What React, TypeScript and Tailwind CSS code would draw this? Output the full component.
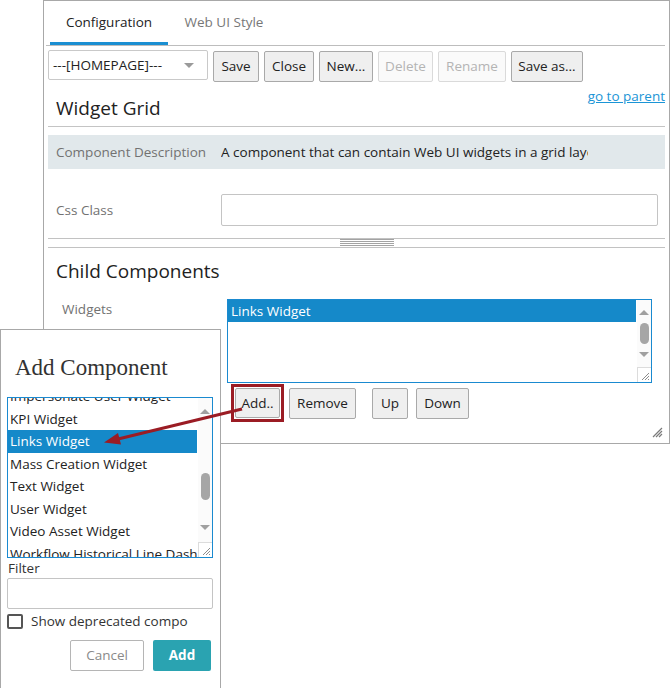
import React from 'react';

const sans = "font-['Open_Sans','Noto_Sans',sans-serif]";

function Tri({ up }: { up?: boolean }) {
  return (
    <div
      className={
        up
          ? 'mx-auto h-0 w-0 border-x-[5px] border-b-[5px] border-x-transparent border-b-[#a0a0a0]'
          : 'mx-auto h-0 w-0 border-x-[5px] border-t-[5px] border-x-transparent border-t-[#a0a0a0]'
      }
    />
  );
}

function Resizer() {
  return (
    <svg width="9" height="9" viewBox="0 0 9 9" className="block">
      <path d="M1 8 L8 1 M4 8 L8 4 M7 8 L8 7" stroke="#8c8c8c" strokeWidth="1" />
    </svg>
  );
}

interface ScrollbarProps {
  upPad: number;
  thumbTop: number;
  thumbH: number;
  downTop: number;
}

function Scrollbar({ upPad, thumbTop, thumbH, downTop }: ScrollbarProps) {
  return (
    <div className="flex w-[14px] flex-col bg-[#fbfbfb]">
      <div style={{ paddingTop: upPad }}>
        <Tri up />
      </div>
      <div className="mx-auto w-[9px] rounded-full bg-[#a6a6a6]" style={{ marginTop: thumbTop, height: thumbH }} />
      <div style={{ marginTop: downTop }}>
        <Tri />
      </div>
      <div className="mt-auto flex h-[15px] w-[14px] items-end justify-end border-l border-t border-[#dcdcdc] bg-white pb-[1px] pr-[1px]">
        <Resizer />
      </div>
    </div>
  );
}

function Btn({ label, w, disabled }: { label: string; w: string; disabled?: boolean }) {
  return (
    <button
      className={
        disabled
          ? `${w} h-[31px] rounded-[2px] border border-[#dadada] bg-[#fafafa] text-[13.5px] text-[#b4b4b4]`
          : `${w} h-[31px] rounded-[2px] border border-[#a9a9a9] bg-[#efefef] text-[13.5px] text-[#222]`
      }
    >
      {label}
    </button>
  );
}

const dialogItems = [
  'Impersonate User Widget',
  'KPI Widget',
  'Links Widget',
  'Mass Creation Widget',
  'Text Widget',
  'User Widget',
  'Video Asset Widget',
  'Workflow Historical Line Dashboard',
];

export default function App() {
  return (
    <div className={`relative h-[688px] w-[670px] overflow-hidden bg-white text-[#333] ${sans}`}>
      {/* main config panel */}
      <div className="ml-[43px] flex h-[444px] w-[627px] flex-col border border-[#a8a8a8] px-[4px]">
        <div className="flex h-[44px] items-end">
          <div className="ml-[2px] flex h-[44px] w-[118px] items-center justify-center border-b-[3px] border-[#1b8fd2] pt-[2px] text-[13.5px] text-[#222]">
            Configuration
          </div>
          <div className="flex h-[44px] w-[112px] items-center justify-center pb-[1px] text-[13.5px] text-[#777]">
            Web UI Style
          </div>
        </div>
        <div className="-ml-[2px] h-[1px] bg-[#bdbdbd]" />

        <div className="mt-[4px] flex items-start gap-[5px]">
          <div className="flex h-[30px] w-[160px] items-center justify-between rounded-[2px] border border-[#c9c9c9] pl-[4px] pr-[13px] text-[13.5px] text-[#222]">
            <span>---[HOMEPAGE]---</span>
            <div className="h-0 w-0 border-x-[5px] border-t-[5px] border-x-transparent border-t-[#9a9a9a]" />
          </div>
          <div className="mt-[1px] flex gap-[5px]">
            <Btn label="Save" w="w-[46px]" />
            <Btn label="Close" w="w-[50px]" />
            <Btn label="New..." w="w-[54px]" />
            <Btn label="Delete" w="w-[55px]" disabled />
            <Btn label="Rename" w="w-[68px]" disabled />
            <Btn label="Save as..." w="w-[72px]" />
          </div>
        </div>

        <div className="flex h-[45px] items-start justify-between border-b border-[#c4c4c4]">
          <div className="mt-[12px] pl-[8px] text-[19px] leading-[28px] text-[#222]">Widget Grid</div>
          <a className="mt-[5px] text-[13.5px] leading-[18px] text-[#1b95d6] underline">go to parent</a>
        </div>

        <div className="mt-[8px] flex h-[34px] items-center bg-[#e1e8eb] text-[13.5px]">
          <div className="w-[173px] pl-[8px] text-[#727272]">Component Description</div>
          <div className="w-[367px] overflow-hidden whitespace-nowrap text-[#222]">
            A component that can contain Web UI widgets in a grid layout.
          </div>
        </div>

        <div className="mt-[25px] flex h-[32px] items-center text-[13.5px]">
          <div className="w-[173px] pl-[8px] text-[#727272]">Css Class</div>
          <div className="h-[32px] w-[437px] rounded-[2px] border border-[#c4c4c4]" />
        </div>

        <div className="mt-[12px] flex h-[10px] border-y border-[#c2c2c2] pl-[292px]">
          <div className="flex w-[54px] flex-col gap-[1px]">
            <div className="h-[1px] bg-[#a3a3a3]" />
            <div className="h-[1px] bg-[#a3a3a3]" />
            <div className="h-[1px] bg-[#a3a3a3]" />
            <div className="h-[1px] bg-[#a3a3a3]" />
          </div>
        </div>

        <div className="mt-[9px] pl-[8px] text-[19px] leading-[28px] text-[#222]">Child Components</div>

        <div className="mt-[14px] flex items-start">
          <div className="mt-[1px] w-[179px] pl-[14px] text-[13.5px] leading-[18px] text-[#727272]">Widgets</div>
          <div className="flex h-[84px] w-[425px] border border-[#1a8ad0]">
            <div className="flex-1">
              <div className="mr-[1px] h-[22px] bg-[#1589c9] pl-[3px] text-[13.5px] leading-[22px] text-white">
                Links Widget
              </div>
            </div>
            <Scrollbar upPad={10} thumbTop={8} thumbH={21} downTop={8} />
          </div>
        </div>

        <div className="mt-[1px] flex items-center pl-[183px]">
          <div className="border-[3px] border-[#9b1c24] p-[1px]">
            <button className="block h-[30px] w-[45px] rounded-[2px] border border-[#a9a9a9] bg-[#efefef] text-[13.5px] text-[#222]">
              Add..
            </button>
          </div>
          <div className="ml-[5px]">
            <Btn label="Remove" w="w-[67px]" />
          </div>
          <div className="ml-[16px]">
            <Btn label="Up" w="w-[36px]" />
          </div>
          <div className="ml-[8px]">
            <Btn label="Down" w="w-[53px]" />
          </div>
        </div>

        <div className="mt-auto mb-[5px] flex justify-end pr-[2px]">
          <svg width="11" height="11" viewBox="0 0 11 11">
            <path d="M1 10 L10 1 M4 10 L10 4 M7 10 L10 7" stroke="#7a7a7a" strokeWidth="1.2" />
          </svg>
        </div>
      </div>

      {/* Add Component dialog */}
      <div className="absolute left-0 top-[329px] flex h-[360px] w-[221px] flex-col border border-[#a8a8a8] bg-white px-[6px]">
        <div className="ml-[8px] mt-[23px] font-['Liberation_Serif',serif] text-[23px] leading-[30px] text-[#333]">
          Add Component
        </div>
        <div className="mt-[14px] flex h-[161px] w-[206px] border border-[#1a8ad0]">
          <div className="flex-1 overflow-hidden">
            <div className="-mt-[13px]">
              {dialogItems.map((it) => (
                <div
                  key={it}
                  className={
                    it === 'Links Widget'
                      ? 'mr-[1px] h-[22.5px] whitespace-nowrap bg-[#1589c9] pl-[2px] text-[13.5px] leading-[22.5px] text-white'
                      : 'h-[22.5px] whitespace-nowrap pl-[2px] text-[13.5px] leading-[22.5px] text-[#222]'
                  }
                >
                  {it}
                </div>
              ))}
            </div>
          </div>
          <Scrollbar upPad={11} thumbTop={59} thumbH={27} downTop={25} />
        </div>
        <div className="mt-[1px] pl-[1px] text-[13.5px] leading-[18px] text-[#333]">Filter</div>
        <div className="mt-[1px] h-[31px] w-[206px] rounded-[2px] border border-[#c4c4c4]" />
        <div className="mt-[5px] flex h-[15px] items-center gap-[8px]">
          <div className="h-[15px] w-[16px] rounded-[2px] border-2 border-[#555]" />
          <span className="text-[13.5px] leading-[15px] text-[#333]">Show deprecated compo</span>
        </div>
        <div className="mt-[11px] flex gap-[9px] pl-[63px]">
          <button className="h-[31px] w-[74px] rounded-[2px] border border-[#b5b5b5] bg-white text-[13.5px] text-[#8a8a8a]">
            Cancel
          </button>
          <button className="h-[31px] w-[58px] rounded-[2px] bg-[#2aa3b1] text-[13.5px] font-bold text-white">
            Add
          </button>
        </div>
      </div>

      {/* annotation arrow */}
      <svg className="absolute left-0 top-0" width="670" height="688" viewBox="0 0 670 688">
        <line x1="242" y1="409" x2="116" y2="439.5" stroke="#9b1c24" strokeWidth="3" />
        <polygon points="104,442.5 118,433 121,444.5" fill="#9b1c24" />
      </svg>
    </div>
  );
}
